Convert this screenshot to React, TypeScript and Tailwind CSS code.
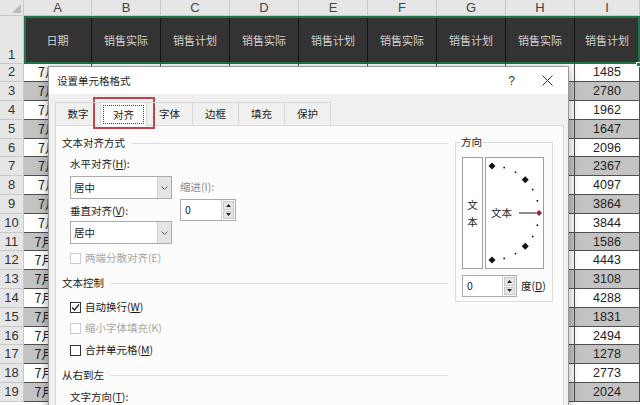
import React from 'react'

const cjk = "font-['Noto_Sans_CJK_SC',sans-serif]"
const num = "font-['Liberation_Sans',sans-serif]"

const colWidths = ['w-[68px]', 'w-[69px]', 'w-[69px]', 'w-[69px]', 'w-[69px]', 'w-[69px]', 'w-[69px]', 'w-[69px]', 'w-[65px]']
const letters = ['A', 'B', 'C', 'D', 'E', 'F', 'G', 'H', 'I']
const headers = ['日期', '销售实际', '销售计划', '销售实际', '销售计划', '销售实际', '销售计划', '销售实际', '销售计划']
const colI = [1485, 2780, 1962, 1647, 2096, 2367, 4097, 3864, 3844, 1586, 4443, 3108, 4288, 1831, 2494, 1278, 2773, 2024]

function Sheet() {
  return (
    <div className="flex flex-col">
      {/* Column letters */}
      <div className="flex h-[16px]">
        <div className="w-[24px] shrink-0 bg-[#e6e6e6] border-r border-b border-[#c8c8c8] relative">
          <svg className="absolute right-[2px] bottom-[2px]" width="9" height="9" viewBox="0 0 9 9">
            <path d="M9 0L9 9L0 9Z" fill="#b9b9b9" />
          </svg>
        </div>
        {letters.map((l, c) => (
          <div
            key={l}
            className={`${colWidths[c]} shrink-0 bg-[#e6e6e6] border-r border-b border-[#c8c8c8] flex items-center justify-center text-[13px] leading-[14px] text-[#444] ${num}`}
          >
            {l}
          </div>
        ))}
      </div>

      {/* Row 1 – dark title row */}
      <div className="flex h-[47.5px]">
        <div className={`w-[24px] shrink-0 bg-[#e6e6e6] border-r border-b border-[#c8c8c8] flex items-end justify-center pb-[1px] text-[13px] leading-[14px] text-[#333] ${num}`}>
          1
        </div>
        <div className="flex relative outline-2 outline-[#217346] -outline-offset-2">
          {headers.map((h, c) => (
            <div
              key={c}
              className={`${colWidths[c]} shrink-0 bg-[#333333] border-r border-[#141414] flex items-center justify-center text-[11px] leading-[14px] text-[#d4d4d4] ${cjk}`}
            >
              {h}
            </div>
          ))}
          <div className="absolute right-[-1px] bottom-[-3px] w-[5px] h-[5px] bg-[#217346] border border-white" />
        </div>
      </div>

      {/* Data rows */}
      {colI.map((v, i) => {
        const bg = i % 2 === 1 ? 'bg-[#c3c3c3]' : 'bg-white'
        return (
          <div key={i} className="flex h-[18.8px]">
            <div className={`w-[24px] shrink-0 bg-[#e6e6e6] border-r border-b border-[#c8c8c8] flex items-center justify-center text-[13px] leading-[14px] text-[#333] ${num}`}>
              {i + 2}
            </div>
            {colWidths.map((w, c) => (
              <div
                key={c}
                className={`${w} shrink-0 ${bg} border-r border-b border-[#4f4f4f] flex items-center justify-center text-[12.5px] leading-[14px] text-[#222] ${c === 0 ? cjk : num}`}
              >
                {c === 0 ? `7月${i + 1}日` : c === 8 ? v : ''}
              </div>
            ))}
          </div>
        )
      })}
    </div>
  )
}

function Select() {
  return (
    <div className="w-[102px] h-[23px] border border-[#ababab] bg-white flex">
      <div className="flex-1 flex items-center pl-[3px]">居中</div>
      <div className="w-[14px] bg-[#e5e5e5] border-l border-[#d0d0d0] flex items-center justify-center">
        <svg width="7" height="4" viewBox="0 0 7 4">
          <path d="M0.5 0.5L3.5 3.5L6.5 0.5" stroke="#555" fill="none" />
        </svg>
      </div>
    </div>
  )
}

function Spinner({ width }: { width: string }) {
  return (
    <div className={`${width} h-[22px] border border-[#ababab] bg-white flex`}>
      <div className="flex-1 flex items-center pl-[4px]">0</div>
      <div className="w-[14px] flex flex-col gap-[1px] p-[1px] border-l border-[#d0d0d0]">
        <div className="flex-1 bg-[#e6e6e6] border border-[#c6c6c6] flex items-center justify-center">
          <svg width="5" height="3" viewBox="0 0 5 3"><path d="M0 3L2.5 0L5 3Z" fill="#222" /></svg>
        </div>
        <div className="flex-1 bg-[#e6e6e6] border border-[#c6c6c6] flex items-center justify-center">
          <svg width="5" height="3" viewBox="0 0 5 3"><path d="M0 0L2.5 3L5 0Z" fill="#222" /></svg>
        </div>
      </div>
    </div>
  )
}

function Check({ checked, disabled, children }: { checked?: boolean; disabled?: boolean; children: React.ReactNode }) {
  return (
    <div className={`flex items-center h-[16px] gap-[4px] ${disabled ? 'text-[#a6a6a6]' : ''}`}>
      <div className={`w-[11px] h-[11px] border bg-white flex items-center justify-center ${disabled ? 'border-[#cccccc]' : 'border-[#333]'}`}>
        {checked && (
          <svg width="9" height="9" viewBox="0 0 9 9">
            <path d="M1 4.5L3.5 7L8 1.5" stroke="#222" strokeWidth="1.2" fill="none" />
          </svg>
        )}
      </div>
      <span>{children}</span>
    </div>
  )
}

function GroupHeader({ title, className }: { title: string; className: string }) {
  return (
    <div className={`flex items-center h-[18px] gap-[6px] ${className}`}>
      <span>{title}</span>
      <div className="flex-1 h-px bg-[#dedede]" />
    </div>
  )
}

function Dial() {
  const marks: React.ReactNode[] = []
  for (let a = 90; a >= -90; a -= 15) {
    const r = (a * Math.PI) / 180
    const x = 6 + 47 * Math.cos(r)
    const y = 55 - 47 * Math.sin(r)
    if (a === 0) {
      marks.push(<path key={a} d={`M${x} ${y - 3}L${x + 3} ${y}L${x} ${y + 3}L${x - 3} ${y}Z`} fill="#9b2335" />)
    } else if (a % 45 === 0) {
      marks.push(<path key={a} d={`M${x} ${y - 3.5}L${x + 3.5} ${y}L${x} ${y + 3.5}L${x - 3.5} ${y}Z`} fill="#111" />)
    } else {
      marks.push(<rect key={a} x={x - 0.8} y={y - 0.8} width="1.6" height="1.6" fill="#111" />)
    }
  }
  return (
    <svg width="57" height="110" viewBox="0 0 57 110">
      <text x="5" y="59" fontSize="10.5" fill="#1b1b1b" fontFamily="Noto Sans CJK SC, sans-serif">文本</text>
      <line x1="33" y1="55" x2="50" y2="55" stroke="#444" strokeWidth="1.2" />
      {marks}
    </svg>
  )
}

function FormatDialog() {
  return (
    <div className={`absolute left-[48px] top-[66px] w-[521px] h-[360px] bg-[#f0f0f0] border border-[#9a9a9a] shadow-[0_2px_10px_rgba(0,0,0,0.35)] flex flex-col ${cjk} text-[10.5px] leading-[14px] text-[#1b1b1b]`}>
      {/* Title bar */}
      <div className="h-[27px] shrink-0 bg-white flex items-center pl-[8px] pr-[15px]">
        <span>设置单元格格式</span>
        <span className={`ml-auto mr-[27px] text-[12px] text-[#333] ${num}`}>?</span>
        <svg width="11" height="11" viewBox="0 0 11 11">
          <path d="M0.5 0.5L10.5 10.5M10.5 0.5L0.5 10.5" stroke="#333" strokeWidth="1" />
        </svg>
      </div>

      <div className="flex-1 flex flex-col pl-[6px] pr-[4px] pt-[8px]">
        {/* Tabs */}
        <div className="flex h-[23px] relative z-10">
          {['数字', '对齐', '字体', '边框', '填充', '保护'].map((t, i) =>
            i === 1 ? (
              <div key={t} className="w-[46px] h-[24px] bg-white border-t border-r border-[#d9d9d9] flex p-[2px]">
                <div className="flex-1 border border-dotted border-[#444] flex items-center justify-center">{t}</div>
              </div>
            ) : (
              <div
                key={t}
                className={`w-[46px] h-[23px] border-t border-r border-[#d9d9d9] flex items-center justify-center ${i === 0 ? 'border-l' : ''}`}
              >
                {t}
              </div>
            )
          )}
        </div>

        {/* Panel */}
        <div className="flex-1 bg-[#fcfcfc] border border-[#d9d9d9] flex">
          <div className="w-[392px] pl-[6px] flex flex-col">
            <GroupHeader title="文本对齐方式" className="mt-[8px]" />
            <div className="pl-[8px] flex gap-[8px]">
              <div className="flex flex-col">
                <div className="h-[16px] mt-[4px] flex items-center">
                  水平对齐(<u>H</u>):
                </div>
                <div className="mt-[4px]"><Select /></div>
                <div className="h-[16px] mt-[4px] flex items-center">
                  垂直对齐(<u>V</u>):
                </div>
                <div className="mt-[2px]"><Select /></div>
              </div>
              <div className="flex flex-col">
                <div className="h-[16px] mt-[27px] flex items-center text-[#8a8a8a]">缩进(I):</div>
                <div className="mt-[4px]"><Spinner width="w-[56px]" /></div>
              </div>
            </div>
            <div className="pl-[8px] mt-[6px]">
              <Check disabled>两端分散对齐(E)</Check>
            </div>

            <GroupHeader title="文本控制" className="mt-[8px]" />
            <div className="pl-[8px] flex flex-col">
              <div className="mt-[7px]">
                <Check checked>
                  自动换行(<u>W</u>)
                </Check>
              </div>
              <div className="mt-[5px]">
                <Check disabled>缩小字体填充(K)</Check>
              </div>
              <div className="mt-[6px]">
                <Check>
                  合并单元格(<u>M</u>)
                </Check>
              </div>
            </div>

            <GroupHeader title="从右到左" className="mt-[8px]" />
            <div className="pl-[8px] mt-[5px] h-[16px] flex items-center">
              文字方向(<u>T</u>):
            </div>
          </div>

          {/* Direction group */}
          <div className="ml-[7px] mt-[16px] w-[98px] h-[160px] border border-[#dcdcdc] relative pl-[6px] pt-[14px]">
            <span className="absolute -top-[8px] left-[4px] px-[1px] bg-[#fcfcfc] leading-[14px]">方向</span>
            <div className="flex gap-[2px]">
              <div className="w-[21px] h-[112px] border border-[#a0a0a0] bg-white flex flex-col items-center justify-center gap-[4px] leading-[13px]">
                <span>文</span>
                <span>本</span>
              </div>
              <div className="w-[59px] h-[112px] border border-[#a0a0a0] bg-white">
                <Dial />
              </div>
            </div>
            <div className="flex items-center mt-[6px] gap-[4px]">
              <Spinner width="w-[55px]" />
              <span>
                度(<u>D</u>)
              </span>
            </div>
          </div>
        </div>
      </div>

      {/* highlight around the active tab */}
      <div className="absolute left-[44px] top-[30px] w-[62px] h-[32px] border-2 border-[#c0434c]" />
    </div>
  )
}

export default function App() {
  return (
    <div className="relative w-[640px] h-[405px] overflow-hidden bg-white">
      <Sheet />
      <FormatDialog />
    </div>
  )
}
